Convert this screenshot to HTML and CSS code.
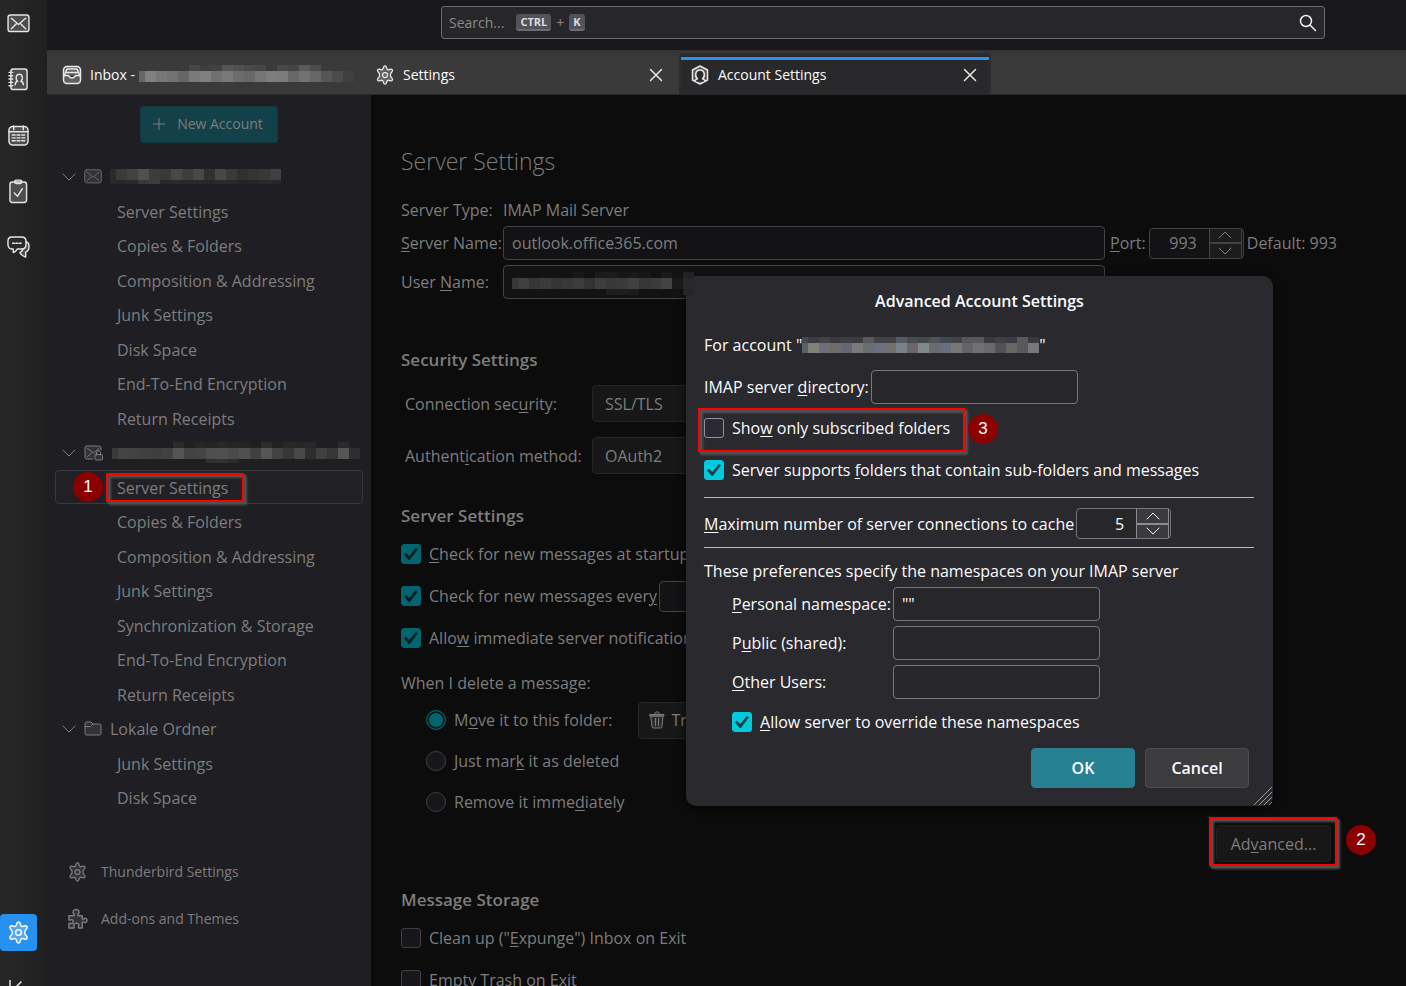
FILE: index.html
```html
<!DOCTYPE html>
<html lang="en">
<head>
  <meta charset="UTF-8">
  <meta name="viewport" content="width=device-width, initial-scale=1.0">
  <title>Account Settings</title>
  <link rel="stylesheet" href="styles.css">
</head>
<body>
  <!-- shared icons -->
  <svg class="sprite" aria-hidden="true">
    <symbol id="i-mail" viewBox="0 0 24 20">
      <rect x="1" y="1" width="22" height="17.5" rx="2.5" class="fill"/>
      <path d="M4.5 4.5l7.5 6.5 7.5-6.5M4.5 15.500l5-5M19.500 15.500l-5-5"/>
    </symbol>
    <symbol id="i-gear" viewBox="0 0 24 24">
      <path class="fill" d="M10.400 2.200c.5-1.600 2.700-1.600 3.200 0l.6 2c.4 1.200 1.400 1.700 2.600 1.400l2-.6c1.900-.3 3 1.600 1.700 3l-1.300 1.600c-.9 1-.9 3.800 0 4.800l1.300 1.600c1.300 1.400.2 3.300-1.700 3l-2-.6c-1.200-.3-2.200.2-2.600 1.400l-.6 2c-.5 1.600-2.700 1.600-3.200 0l-.6-2c-.4-1.200-1.400-1.700-2.600-1.400l-2 .6c-1.900.3-3-1.600-1.700-3l1.300-1.600c.9-1 .9-3.800 0-4.800L3.500 8c-1.300-1.400-.2-3.300 1.700-3l2 .6c1.200.3 2.200-.2 2.600-1.400z"/>
      <circle class="hole" cx="12" cy="12" r="3"/>
    </symbol>
    <symbol id="i-x" viewBox="0 0 14 14"><path d="M1.500 1.500l11 11M12.500 1.500l-11 11"/></symbol>
    <symbol id="i-down" viewBox="0 0 14 8"><path d="M1 1l6 6 6-6"/></symbol>
    <symbol id="i-up" viewBox="0 0 14 8"><path d="M1 7l6-6 6 6"/></symbol>
  </svg>

  <nav class="spaces" aria-label="Spaces">
    <button aria-label="Mail"><svg class="icon" width="23" height="19"><use href="#i-mail"/></svg></button>
    <button aria-label="Address Book">
      <svg class="icon" width="21" height="23" viewBox="0 0 22 24">
        <rect x="3" y="1" width="17" height="21.500" rx="2.500" class="fill"/>
        <path d="M1 4.500h4M1 8h4M1 11.500h4M1 15h4M1 18.500h4"/>
        <path d="M7.500 17.500c0-2.500 1-3.200 2.600-3.700-2.600-2-2-7.300 1.700-7.300s4.300 5.300 1.700 7.300c1.600.5 2.600 1.200 2.600 3.700"/>
      </svg>
    </button>
    <button aria-label="Calendar">
      <svg class="icon" width="21" height="21" viewBox="0 0 22 22">
        <rect x="1" y="1.500" width="20" height="19.500" rx="4" class="fill"/>
        <path d="M1 7h20M6 1v4M16 1v4"/>
        <path stroke-dasharray="3 2" d="M4.500 10.500h14M4.500 13.500h14M4.500 16.500h14"/>
      </svg>
    </button>
    <button aria-label="Tasks">
      <svg class="icon" width="19" height="25" viewBox="0 0 20 26">
        <rect x="1" y="3" width="17.500" height="21.500" rx="2.500" class="fill"/>
        <rect x="6" y="1" width="7.500" height="3.500" rx="1.500" class="fill"/>
        <path d="M5.500 14.500l3.500 3.500 5-8"/>
      </svg>
    </button>
    <button aria-label="Chat">
      <svg class="icon" width="23" height="23" viewBox="0 0 24 24">
        <path class="fill" d="M20 6c2 .5 3 2.500 3 5 0 3-1 5-3.500 5.800v5.200c-3-1-4.800-2.500-6-4.500L16 15z"/>
        <path class="shade" d="M5 1h10.500c3 0 4.300 2 4.300 4.500v3c0 3-1.500 5-4.300 5H11c-1 1.800-2.500 3-4.500 3.800v-3.800H5c-2.800 0-4-2-4-5v-3C1 3 2.200 1 5 1z"/>
        <path stroke-dasharray="2 1.500" d="M5.800 7.500h9"/>
      </svg>
    </button>
    <button class="space-settings" aria-label="Settings"><svg class="icon" width="23" height="23"><use href="#i-gear"/></svg></button>
    <button class="space-collapse" aria-label="Collapse"><svg class="icon" width="14" height="18" viewBox="0 0 14 18"><path d="M2 0v18M13 2L6 9l7 7"/></svg></button>
  </nav>

  <div class="window">
    <header class="toolbar">
      <div class="search">
        <label for="search">Search...</label>
        <kbd>CTRL</kbd><span>+</span><kbd>K</kbd>
        <input id="search" type="text">
        <svg class="icon" width="18" height="18" viewBox="0 0 18 18"><circle cx="7" cy="7" r="5.500"/><path d="M11 11l5.500 5.500"/></svg>
      </div>
    </header>

    <div class="tabs">
      <div class="tab">
        <svg class="icon" width="20" height="20" viewBox="0 0 20 20">
          <rect class="fill" x="1.500" y="1.500" width="17" height="17" rx="3.500"/>
          <path d="M2 11l2.500-6c.3-.7.6-1 1.500-1h8c.900 0 1.200.3 1.500 1l2.500 6M4.500 7.500h11"/>
          <path class="shade" d="M2 10.500h4c1 0 1 2.500 4 2.500s3-2.500 4-2.500h4"/>
        </svg>
        <span>Inbox -</span>
        <svg class="mosaic" data-rows="6:- - - - - 46 3e 42 55 50 4a 46 3a 48 44 5a 4c|11:66 80 78 72 66 7a 80 70 78 6c 68 76 7e 7c 68 72 66 56 4c 40"></svg>
      </div>
      <div class="tab">
        <svg class="icon" width="20" height="20"><use href="#i-gear"/></svg>
        <span>Settings</span>
        <button aria-label="Close Settings"><svg class="icon" width="14" height="14"><use href="#i-x"/></svg></button>
      </div>
      <div class="tab selected">
        <svg class="icon" width="20" height="20" viewBox="0 0 20 20">
          <path class="fill" d="M10 1l7.500 4v10L10 19l-7.500-4V5z"/>
          <path class="shade" d="M5 16.500c0-1.500 1-2.200 2.500-2.700C4.600 11.500 5 5 10 5s5.400 6.500 2.500 8.800c1.500.5 2.500 1.200 2.500 2.700"/>
        </svg>
        <span>Account Settings</span>
        <button aria-label="Close Account Settings"><svg class="icon" width="14" height="14"><use href="#i-x"/></svg></button>
      </div>
    </div>

    <div class="content">
      <aside class="sidebar">
        <button class="new-account">
          <svg class="icon" width="12" height="12" viewBox="0 0 12 12"><path d="M6 0v12M0 6h12"/></svg>
          New Account
        </button>

        <ul class="tree">
          <li>
            <div class="account">
              <svg class="icon" width="14" height="8"><use href="#i-down"/></svg>
              <svg class="icon" width="18" height="15"><use href="#i-mail"/></svg>
              <svg class="mosaic" data-rows="11:2c 3a 42 50 3c 3a 48 3e 48 30 48 3a 30 34 38 40|4:28 28 2a 38 3c 28 2a 29 2a 26 2a 28 24 26 2a 28"></svg>
            </div>
            <ul>
              <li><a href="#">Server Settings</a></li>
              <li><a href="#">Copies &amp; Folders</a></li>
              <li><a href="#">Composition &amp; Addressing</a></li>
              <li><a href="#">Junk Settings</a></li>
              <li><a href="#">Disk Space</a></li>
              <li><a href="#">End-To-End Encryption</a></li>
              <li><a href="#">Return Receipts</a></li>
            </ul>
          </li>
          <li>
            <div class="account">
              <svg class="icon" width="14" height="8"><use href="#i-down"/></svg>
              <svg class="icon" width="20" height="16" viewBox="0 0 20 16">
                <path class="fill" d="M9 14H3c-1.500 0-2-.8-2-2V3c0-1.500.8-2 2-2h12c1.500 0 2 .8 2 2v2"/>
                <path d="M3.500 3.500l6 4.500 5.500-4.500M3.500 11.500l4-3.500"/>
                <path d="M12.500 10V8c0-3 4-3 4 0v2"/><rect class="fill" x="11" y="9.500" width="7.500" height="5.500" rx="1"/>
              </svg>
              <svg class="mosaic" data-rows="6:- - - - - - 2b 20 26 24 28 26 24 20 2c 22 28 27 28 - - 2a|11:3a 44 42 40 3e 42 54 42 44 4e 50 4a 50 40 56 42 36 48 2e 40 36 56 2e|4:- - - - - - - - - 30 32 2c"></svg>
            </div>
            <ul>
              <li class="selected">
                <a href="#">Server Settings</a>
                <span class="frame frame-server"></span><span class="step step-1">1</span>
              </li>
              <li><a href="#">Copies &amp; Folders</a></li>
              <li><a href="#">Composition &amp; Addressing</a></li>
              <li><a href="#">Junk Settings</a></li>
              <li><a href="#">Synchronization &amp; Storage</a></li>
              <li><a href="#">End-To-End Encryption</a></li>
              <li><a href="#">Return Receipts</a></li>
            </ul>
          </li>
          <li>
            <div class="account">
              <svg class="icon" width="14" height="8"><use href="#i-down"/></svg>
              <svg class="icon" width="18" height="15" viewBox="0 0 18 15"><path class="fill" d="M1 3c0-1.500.5-2 2-2h4l2 2h6c1.500 0 2 .5 2 2v7c0 1.500-.5 2-2 2H3c-1.500 0-2-.5-2-2zM1 5.500h5.500L9 3"/></svg>
              <span>Lokale Ordner</span>
            </div>
            <ul>
              <li><a href="#">Junk Settings</a></li>
              <li><a href="#">Disk Space</a></li>
            </ul>
          </li>
        </ul>

        <div class="links">
          <a href="#"><svg class="icon" width="20" height="20"><use href="#i-gear"/></svg>Thunderbird Settings</a>
          <a href="#">
            <svg class="icon" width="22" height="22" viewBox="0 0 22 22"><path class="fill" d="M2 7.500h5.500V6C5 3 7 1 9.500 1S14 3 11.500 6v1.500H16V11h1.500c2-2 3.500 0 3.500 1.500S19 16 17.500 14H16v6.500h-4V19c1.500-2-.5-3.500-2-3.500S6 17 7.500 19v1.500H2v-5h2c3 1.500 3.500-5 0-3.500H2z"/></svg>
            Add-ons and Themes
          </a>
        </div>
      </aside>

      <main class="pane">
        <h1>Server Settings</h1>
        <div class="server-grid">
          <span>Server Type:</span>
          <span class="server-type">IMAP Mail Server</span>
          <label for="host"><u>S</u>erver Name:</label>
          <input id="host" type="text" value="outlook.office365.com">
          <div class="port">
            <label for="port"><u>P</u>ort:</label>
            <div class="spin">
              <input id="port" type="text" inputmode="numeric" value="993">
              <div class="spin-buttons">
                <button aria-label="Increase port"><svg class="icon" width="14" height="8"><use href="#i-up"/></svg></button>
                <button aria-label="Decrease port"><svg class="icon" width="14" height="8"><use href="#i-down"/></svg></button>
              </div>
            </div>
            <span>Default: 993</span>
          </div>
          <label for="user">User <u>N</u>ame:</label>
          <div class="user">
            <input id="user" type="text">
            <svg class="mosaic" data-rows="6:- - - - - - 18 12 1b 1c 16 19 17 12 1a 12 22|11:38 3f 36 3b 35 38 3c 33 3e 38 3a 41 36 3b 43 1a 29|6:- - - - - - - - - 1d 1e 1c - - - - 26"></svg>
          </div>
        </div>

        <h2>Security Settings</h2>
        <div class="security-grid">
          <label for="security">Connection sec<u>u</u>rity:</label>
          <select id="security"><option>SSL/TLS</option></select>
          <label for="auth">Authent<u>i</u>cation method:</label>
          <select id="auth"><option>OAuth2</option></select>
        </div>

        <h2>Server Settings</h2>
        <div class="checks">
          <label class="check"><input type="checkbox" checked><span><u>C</u>heck for new messages at startup</span></label>
          <div class="check-row">
            <label class="check"><input type="checkbox" checked><span>Check for new messages ever<u>y</u></span></label>
            <input class="minutes" type="text" aria-label="Minutes">
          </div>
          <label class="check"><input type="checkbox" checked><span>Allo<u>w</u> immediate server notifications</span></label>
        </div>

        <p class="delete-title">When I delete a message:</p>
        <div class="radios">
          <div class="check-row">
            <label class="check"><input type="radio" name="delete" checked><span>M<u>o</u>ve it to this folder:</span></label>
            <button class="folder">
              <svg class="icon" width="16" height="18" viewBox="0 0 16 18"><path class="fill" d="M2 5h12l-1 10.500c0 1-.5 1.500-1.500 1.500h-7C3.500 17 3 16.500 3 15.500zM1 3.500h14V5H1zM5.500 3c0-3 5-3 5 0M6.500 7.500v7M9.500 7.500v7"/></svg>
              Trash
            </button>
          </div>
          <label class="check"><input type="radio" name="delete"><span>Just mar<u>k</u> it as deleted</span></label>
          <label class="check"><input type="radio" name="delete"><span>Remove it imme<u>d</u>iately</span></label>
        </div>

        <div class="advanced">
          <span class="frame frame-advanced"></span>
          <button>Ad<u>v</u>anced...</button>
          <span class="step step-2">2</span>
        </div>

        <h2>Message Storage</h2>
        <div class="checks">
          <label class="check"><input type="checkbox"><span>Clean up ("<u>E</u>xpunge") Inbox on Exit</span></label>
          <label class="check"><input type="checkbox"><span>Empty Trash on Exit</span></label>
        </div>
      </main>
    </div>
  </div>

  <div class="dialog" role="dialog" aria-labelledby="dialog-title">
    <h2 id="dialog-title">Advanced Account Settings</h2>
    <p class="for-account">For account "<svg class="mosaic" data-rows="6:47474c 3c3c42 424247 3a3a3e 3d3d45 3b3b3c 58585f 434348 434343 565a66 4a4a52 48484a 515158 46464d 434347 57575d 57575c 3a3a3c 404049 3c3c44 5a5a5c 39393d|10:586068 828079 6c6e78 706a6a 666773 7c787c 6a6e70 6c7080 73706e 78828a 6b6668 81888c 6b6c70 6a6e7c 777872 636368 707076 6a6a6c 515156 676663 57575e 77777c"></svg>"</p>
    <div class="directory">
      <label for="directory">IMAP server <u>d</u>irectory:</label>
      <input id="directory" type="text">
    </div>
    <div class="subscribed">
      <span class="frame frame-subscribed"></span>
      <label class="check"><input type="checkbox"><span>Sho<u>w</u> only subscribed folders</span></label>
      <span class="step step-3">3</span>
    </div>
    <label class="check"><input type="checkbox" checked><span>Server supports <u>f</u>olders that contain sub-folders and messages</span></label>
    <div class="connections">
      <label for="connections"><u>M</u>aximum number of server connections to cache</label>
      <div class="spin">
        <input id="connections" type="text" inputmode="numeric" value="5">
        <div class="spin-buttons">
          <button aria-label="Increase connections"><svg class="icon" width="14" height="8"><use href="#i-up"/></svg></button>
          <button aria-label="Decrease connections"><svg class="icon" width="14" height="8"><use href="#i-down"/></svg></button>
        </div>
      </div>
    </div>
    <p class="intro">These preferences specify the namespaces on your IMAP server</p>
    <div class="namespaces">
      <label for="personal"><u>P</u>ersonal namespace:</label>
      <input id="personal" type="text" value='""'>
      <label for="public">P<u>u</u>blic (shared):</label>
      <input id="public" type="text">
      <label for="other"><u>O</u>ther Users:</label>
      <input id="other" type="text">
    </div>
    <label class="check override"><input type="checkbox" checked><span><u>A</u>llow server to override these namespaces</span></label>
    <div class="buttons">
      <button class="primary">OK</button>
      <button>Cancel</button>
    </div>
    <svg class="grip" width="18" height="18" viewBox="0 0 18 18"><path d="M0 18L18 0M5 18L18 5M10 18l8-8M15 18l3-3"/></svg>
  </div>

  <script src="script.js"></script>
</body>
</html>
```
FILE: styles.css
```css
* {
    box-sizing: border-box;
}
body {
    margin: 0;
    height: 100vh;
    display: flex;
    overflow: hidden;
    position: relative;
    background: #0c0c0c;
    color: #7d7d7d;
    font-family: "Open Sans", "Noto Sans", sans-serif;
    font-size: 16px;
    line-height: 22px;
}
button, input, select {
    font: inherit;
    color: inherit;
    margin: 0;
}
button {
    padding: 0;
    border: none;
    background: none;
}
a {
    color: inherit;
    text-decoration: none;
}
ul {
    list-style: none;
    margin: 0;
    padding: 0;
}
h1, h2, p {
    margin: 0;
}
label {
    white-space: nowrap;
}
u {
    text-decoration-thickness: 1px;
    text-underline-offset: 2px;
}
.sprite {
    position: absolute;
    width: 0;
    height: 0;
}
.icon {
    flex: none;
    fill: none;
    stroke: currentColor;
    stroke-width: 1.5px;
    stroke-linecap: round;
    stroke-linejoin: round;
}
.fill {
    fill: currentColor;
    fill-opacity: 0.22;
}
.shade {
    fill: #2b2b2c;
}
.mosaic {
    flex: none;
    display: block;
}

/* spaces rail */
.spaces {
    flex: none;
    width: 47px;
    display: flex;
    flex-direction: column;
    gap: 19px;
    padding-top: 5px;
    background: linear-gradient(to right, #272727, #202020);
    color: #e4e4e4;
}
.spaces button {
    flex: none;
    width: 37px;
    height: 37px;
    display: grid;
    place-items: center;
}
.spaces .space-settings {
    margin-top: auto;
    background: #2791ef;
    border-radius: 4px;
    color: #fff;
}
.spaces .space-collapse {
    margin-bottom: -21px;
    padding-right: 8px;
}

/* top bar and tabs */
.window {
    flex: 1;
    min-width: 0;
    display: flex;
    flex-direction: column;
}
.toolbar {
    flex: none;
    height: 50px;
    display: flex;
    padding: 6px 81px 0 394px;
    background: #18181a;
}
.search {
    flex: 1;
    height: 33px;
    display: flex;
    align-items: center;
    gap: 5px;
    padding: 0 7px;
    border: 1px solid #6c6b73;
    border-radius: 3px;
    background: #27272a;
    color: #8a8a8d;
    font-size: 14px;
}
.search label {
    margin-right: 7px;
}
.search kbd {
    height: 17px;
    padding: 0 4px;
    border-bottom: 2px solid #6b6b72;
    border-radius: 3px;
    background: #52525a;
    color: #dcdcdc;
    font: bold 11px/16px "Open Sans", sans-serif;
}
.search .icon {
    color: #f0f0f0;
}
.tabs {
    flex: none;
    height: 45px;
    display: flex;
    align-items: stretch;
    padding-top: 3px;
    background: linear-gradient(#333334, #3a3a3b 8px);
    border-bottom: 1px solid #2a2a2c;
    color: #fbfbfb;
    font-size: 14px;
    white-space: nowrap;
}
.tab {
    width: 313px;
    display: flex;
    align-items: center;
    gap: 8px;
    padding: 2px 15px 0;
}
.tab .icon {
    color: #e8e8e8;
}
.tab:first-child .mosaic {
    align-self: flex-start;
    margin: 10px 0 0 -4px;
}
.tab:nth-child(2) {
    width: 318px;
}
.tab.selected {
    width: 312px;
    margin-left: 1px;
    padding: 0 12px 0 9px;
    border: 2px solid #2c2c2e;
    border-bottom: none;
    border-radius: 4px 4px 0 0;
    background: linear-gradient(#2d91ee, #2d91ee) 0 2px / 100% 3px no-repeat padding-box #29292b;
}
.tab button {
    display: flex;
    margin-left: auto;
}

/* account tree */
.content {
    flex: 1;
    min-height: 0;
    display: flex;
}
.sidebar {
    flex: none;
    width: 324px;
    display: flex;
    flex-direction: column;
    padding: 11px 8px 0;
    background: #1f1e23;
}
.new-account {
    align-self: center;
    display: flex;
    align-items: center;
    gap: 12px;
    height: 37px;
    padding: 0 14px 2px 12px;
    border: 1px solid #11393f;
    border-radius: 3px;
    background: #124149;
    font-size: 14px;
}
.new-account .icon,
.account .icon,
.spin .icon {
    stroke-width: 1px;
}
.tree {
    margin-top: 16px;
}
.account {
    height: 35px;
    display: flex;
    align-items: center;
    gap: 8px;
    padding-left: 7px;
}
.tree ul li {
    position: relative;
    height: 35px;
    border: 1px solid transparent;
    border-radius: 4px;
    padding-left: 61px;
    line-height: 34px;
}
.tree ul li:nth-child(odd) {
    height: 34px;
}
.tree ul .selected {
    border-color: #39393d;
    background: #212125;
}
.links {
    display: flex;
    flex-direction: column;
    gap: 25px;
    margin-top: 46px;
    padding-left: 12px;
    font-size: 14px;
}
.links a {
    display: flex;
    align-items: center;
    gap: 13px;
    height: 22px;
}
.links .icon {
    width: 21px;
}

/* settings pane */
.pane {
    flex: 1;
    min-width: 0;
    padding: 50px 69px 0 30px;
}
.pane h1 {
    font-size: 23px;
    font-weight: 300;
    line-height: 32px;
}
.pane h2 {
    font-size: 17px;
    font-weight: 600;
    line-height: 24px;
}
.server-grid {
    display: grid;
    grid-template-columns: 97px 1fr auto;
    align-items: center;
    gap: 5px;
    margin: 22px 0 49px;
}
.server-type {
    grid-column: 2 / 4;
}
input[type="text"] {
    min-width: 0;
    height: 34px;
    padding: 0 8px;
    border: 1px solid #434345;
    border-radius: 4px;
    background: #131315;
    outline: none;
}
.search input[type="text"] {
    flex: 1;
    height: 29px;
    border: none;
    background: none;
}
.port {
    display: flex;
    align-items: center;
    gap: 3px;
}
.user {
    position: relative;
    display: flex;
}
.user input {
    flex: 1;
}
.user .mosaic {
    position: absolute;
    left: 9px;
    top: 7px;
    z-index: 3;
}
.spin {
    width: 95px;
    height: 31px;
    display: flex;
    border: 1px solid #434345;
    border-radius: 4px;
    padding-right: 1px;
    background: #131315;
}
.spin input[type="text"] {
    flex: 1;
    height: 29px;
    padding: 0 12px;
    border: none;
    background: none;
    text-align: right;
}
.spin-buttons {
    display: flex;
    flex-direction: column;
    gap: 2px;
    width: 33px;
    border: solid #434345;
    border-width: 0 1px;
    background: #434345;
}
.spin-buttons button {
    flex: 1;
    display: grid;
    place-items: center;
    background: #1c1c1c;
}
.security-grid {
    display: grid;
    grid-template-columns: 187px 240px;
    row-gap: 15px;
    align-items: center;
    padding-left: 4px;
    margin: 13px 0 30px;
}
select, .folder {
    appearance: none;
    height: 37px;
    padding: 0 12px;
    border: 1px solid #262627;
    border-radius: 4px;
    background: #171717;
}
.checks {
    display: flex;
    flex-direction: column;
    gap: 20px;
    margin-top: 15px;
}
.check {
    display: flex;
    align-items: center;
    gap: 8px;
}
.check-row {
    display: flex;
    align-items: center;
    gap: 2px;
    height: 22px;
}
.check input {
    flex: none;
    appearance: none;
    width: 20px;
    height: 20px;
    border: 1px solid #3f3f45;
    border-radius: 3px;
    background: #16161b;
}
.check input[type="checkbox"]:checked {
    border-color: #00656e;
    background: #00656e;
    display: grid;
    place-items: center;
}
.check input[type="checkbox"]:checked::before {
    content: "";
    width: 14px;
    height: 12px;
    background: #061f24;
    clip-path: polygon(0 54%, 14% 40%, 38% 66%, 84% 0, 100% 10%, 42% 100%, 34% 100%);
}
.check input[type="radio"] {
    border-radius: 50%;
}
.check input[type="radio"]:checked {
    border-color: #00656e;
    background: #00656e;
    box-shadow: inset 0 0 0 2px #10191c;
}
.check-row .minutes {
    width: 60px;
    height: 31px;
}
.delete-title {
    margin-top: 23px;
}
.radios {
    display: flex;
    flex-direction: column;
    gap: 19px;
    margin-top: 15px;
    padding-left: 25px;
}
.radios .check-row {
    gap: 26px;
}
.folder {
    display: flex;
    align-items: center;
    gap: 6px;
    width: 200px;
    padding: 0 10px;
}
.folder .icon {
    stroke-width: 1px;
}
.advanced {
    position: relative;
    width: 115px;
    margin: 12px 6px 26px auto;
}
.advanced button {
    position: relative;
    width: 100%;
    height: 37px;
    border: 1px solid #202020;
    border-radius: 4px;
    background: #171717;
}

/* step markers */
.frame {
    position: absolute;
    border: 2px solid #f00;
    filter: drop-shadow(2px 2px 0 #505050) drop-shadow(1px 1px 1px #505050);
    pointer-events: none;
}
.frame-server {
    inset: 2px 118px 1px 50px;
}
.frame-advanced {
    inset: -8px -6px -4px -7px;
}
.frame-subscribed {
    inset: -9px 290px -13px -6px;
}
.subscribed .check {
    position: relative;
}
.step {
    position: absolute;
    width: 30px;
    height: 30px;
    border-radius: 50%;
    background: #8b0000;
    color: #fff;
    font-family: "Liberation Sans", sans-serif;
    font-size: 17px;
    line-height: 30px;
    text-align: center;
}
.step-1 {
    left: 17px;
    top: 1px;
}
.step-2 {
    right: -45px;
    top: 0;
}
.step-3 {
    right: 257px;
    top: -3px;
}

/* advanced dialog */
.dialog {
    position: absolute;
    top: 276px;
    right: 133px;
    width: 587px;
    padding: 14px 18px 18px;
    border-radius: 10px;
    background: #2a292e;
    box-shadow: 0 2px 10px rgba(0, 0, 0, 0.7);
    color: #fbfbfe;
    z-index: 2;
}
.dialog h2 {
    font-size: 16px;
    font-weight: 600;
    line-height: 22px;
    text-align: center;
}
.dialog input[type="text"] {
    width: 207px;
    border-color: #77767b;
    background: #272729;
}
.for-account {
    display: flex;
    margin-top: 22px;
}
.for-account .mosaic {
    margin-top: 3px;
}
.directory {
    display: flex;
    align-items: center;
    gap: 2px;
    margin-top: 14px;
}
.subscribed {
    position: relative;
    margin: 13px 0 20px;
}
.dialog .check input {
    border-color: #8f8f9d;
    background: #2b2a33;
}
.dialog .check input:checked {
    border-color: #00cadb;
    background: #00cadb;
}
.dialog .check input[type="checkbox"]:checked::before {
    background: #15414a;
}
.connections {
    display: flex;
    align-items: center;
    gap: 2px;
    margin: 16px 1px 12px 0;
    padding: 10px 0 8px;
    border: solid #bbbbbd;
    border-width: 1px 0;
}
.dialog .spin {
    border-color: #77767b;
    background: #272729;
}
.dialog .spin input[type="text"] {
    width: auto;
    background: none;
}
.dialog .spin-buttons {
    border-color: #8c8c8e;
    background: #8c8c8e;
}
.dialog .spin-buttons button {
    background: #3b3b3d;
}
.namespaces {
    display: grid;
    grid-template-columns: auto 1fr;
    align-items: center;
    gap: 5px 2px;
    margin: 5px 0 12px;
    padding-left: 28px;
}
.override {
    padding-left: 28px;
}
.buttons {
    display: flex;
    justify-content: flex-end;
    gap: 10px;
    margin: 15px 6px 0 0;
}
.buttons button {
    width: 104px;
    height: 40px;
    border: 1px solid #4d4d4f;
    border-radius: 4px;
    background: #3c3c3e;
    font-weight: 600;
}
.buttons .primary {
    border-color: #268293;
    background: #268293;
}
.grip {
    position: absolute;
    right: 1px;
    bottom: 1px;
    stroke: #9a9a9c;
}
```
FILE: script.js
```javascript
// Draws the pixelated address blocks. Each row is "height:shade shade ...",
// "-" leaves a cell empty. Cells are 11px wide, the first one 6px.
document.querySelectorAll('.mosaic').forEach((svg) => {
  let y = 0;
  let width = 0;
  svg.dataset.rows.split('|').forEach((row) => {
    const [height, cells] = row.split(':');
    cells.split(' ').forEach((shade, i) => {
      const x = i === 0 ? 0 : i * 11 - 5;
      const w = i === 0 ? 6 : 11;
      width = Math.max(width, x + w);
      if (shade.length < 2) return;
      const rect = document.createElementNS('http://www.w3.org/2000/svg', 'rect');
      rect.setAttribute('x', x);
      rect.setAttribute('y', y);
      rect.setAttribute('width', w);
      rect.setAttribute('height', height);
      rect.setAttribute('fill', '#' + (shade.length === 2 ? shade.repeat(3) : shade));
      svg.appendChild(rect);
    });
    y += Number(height);
  });
  svg.setAttribute('width', width);
  svg.setAttribute('height', y);
});
```
